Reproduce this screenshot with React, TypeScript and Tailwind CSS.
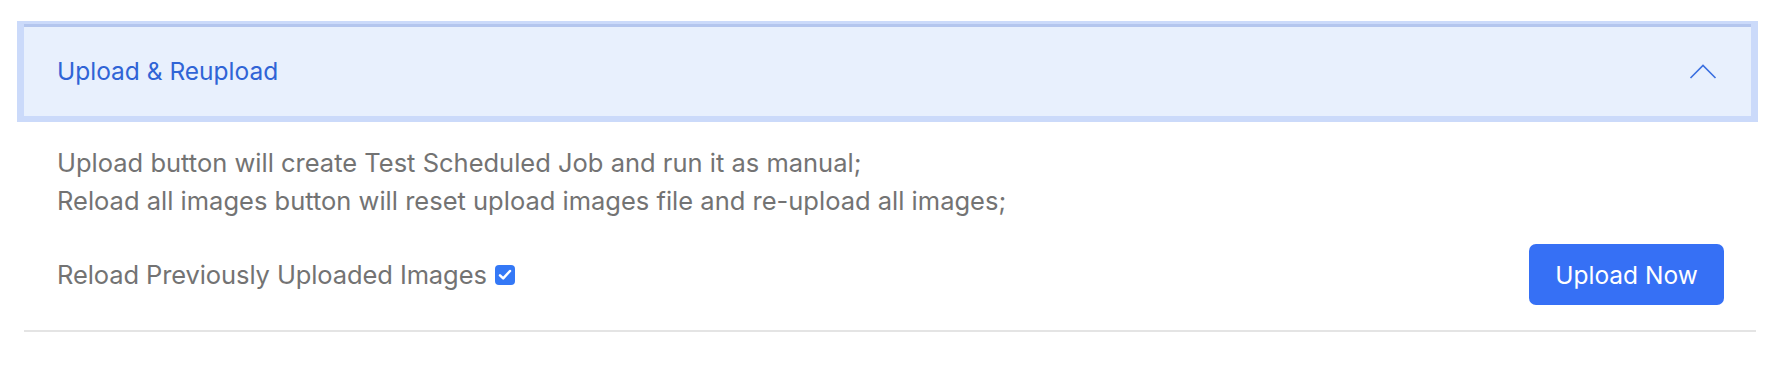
import { useState } from "react";

// Accordion panel: "Upload & Reupload" with the focus ring on the header.

function ChevronUp() {
  return (
    <svg width="28" height="15" viewBox="0 0 28 15" fill="none" aria-hidden="true">
      <path d="M1.5 14 L14 1.5 L26.5 14" stroke="#3a6fe0" strokeWidth="1.6" />
    </svg>
  );
}

function CheckBox({ checked, onChange }: { checked: boolean; onChange: () => void }) {
  return (
    <button
      type="button"
      onClick={onChange}
      className={
        "flex h-[20px] w-[20px] items-center justify-center rounded-[4px] " +
        (checked ? "bg-[#3478f6]" : "border border-[#9a9a9a] bg-white")
      }
    >
      {checked && (
        <svg width="14" height="12" viewBox="0 0 14 12" fill="none">
          <path d="M2 6.3 L5.2 9.4 L12 2" stroke="#ffffff" strokeWidth="2.5" strokeLinecap="round" strokeLinejoin="round" />
        </svg>
      )}
    </button>
  );
}

export default function App() {
  const [open, setOpen] = useState(true);
  const [reload, setReload] = useState(true);

  return (
    <div className="min-h-[366px] w-[1786px] bg-white pt-[21px] font-['Inter','Liberation_Sans',sans-serif]">
      <div className="ml-[17px] w-[1741px] border-x-[7px] border-t-[3px] border-b-[6px] border-[#cbdafa]">
        <button
          type="button"
          onClick={() => setOpen(!open)}
          className="flex h-[92px] w-full items-center justify-between border-t-[3px] border-[#b4c6ee] bg-[#e8f0fd] pl-[33px] pr-[34px] text-left"
        >
          <span className="text-[24.5px] leading-none text-[#3064d6]">Upload &amp; Reupload</span>
          <span className={open ? "" : "rotate-180"}>
            <ChevronUp />
          </span>
        </button>
      </div>

      {open && (
        <div className="ml-[24px] w-[1732px] border-b-2 border-[#e4e4e4] pb-[25px] pl-[33px] pr-[32px] pt-[22px] text-[25.5px] leading-[38px] text-[#737373]">
          <p>Upload button will create Test Scheduled Job and run it as manual;</p>
          <p>Reload all images button will reset upload images file and re-upload all images;</p>

          <div className="mt-[24px] flex items-center justify-between">
            <label className="flex items-center gap-[8px]">
              <span className="tracking-[-0.1px]">Reload Previously Uploaded Images</span>
              <CheckBox checked={reload} onChange={() => setReload(!reload)} />
            </label>
            <button
              type="button"
              className="h-[61px] w-[195px] rounded-[7px] bg-[#3670f5] text-[24.5px] text-white"
            >
              Upload Now
            </button>
          </div>
        </div>
      )}
    </div>
  );
}
